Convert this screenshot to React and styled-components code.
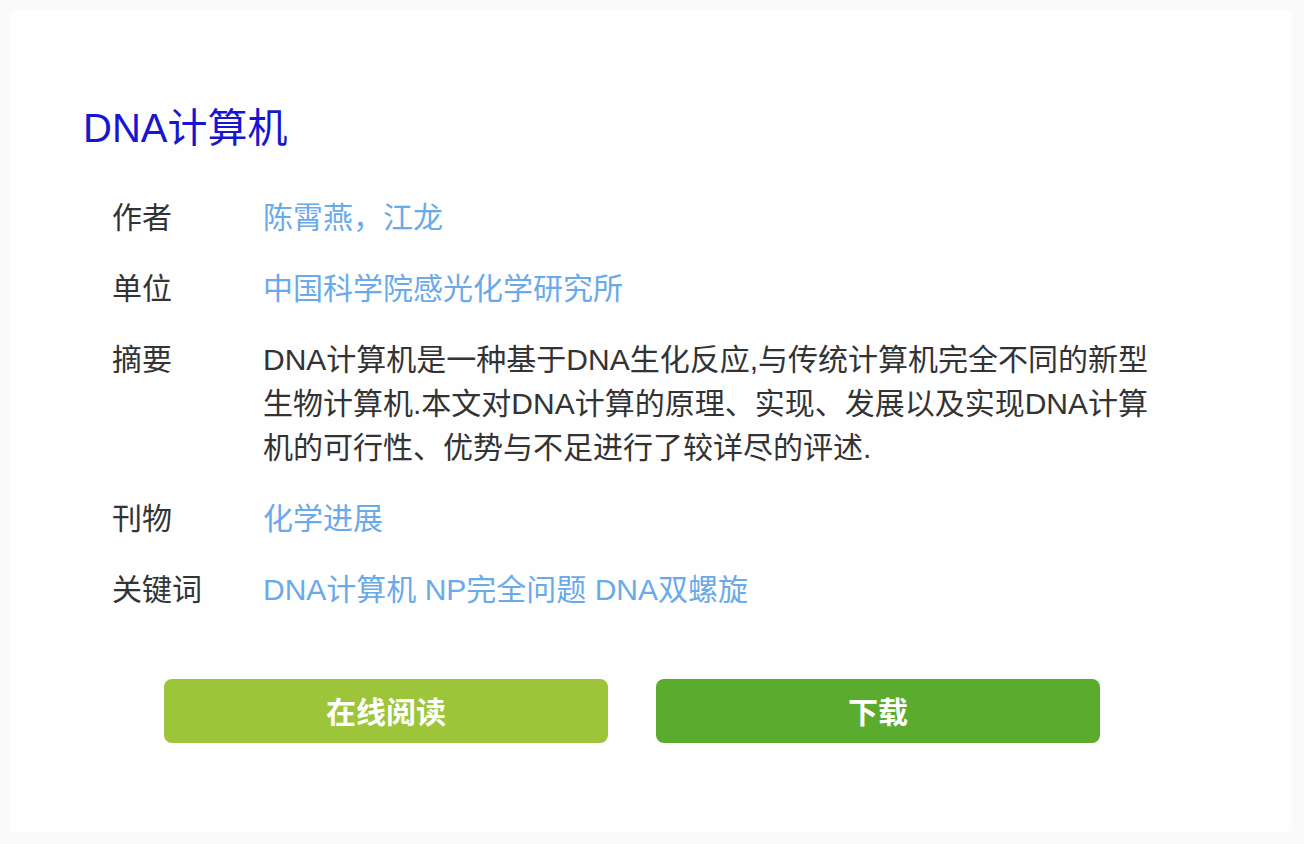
import React from "react";
import styled, { createGlobalStyle } from "styled-components";

const Global = createGlobalStyle`
  html, body { margin: 0; padding: 0; background: #fafafb; }
  body { font-family: "Liberation Sans", "Noto Sans CJK SC", sans-serif; }
`;

const Page = styled.div`
  width: 1304px;
  height: 844px;
  box-sizing: border-box;
  padding: 10px 12px 12px 10px;
`;

const Card = styled.div`
  height: 100%;
  box-sizing: border-box;
  background: #fefeff;
  border-radius: 6px;
  padding: 92px 0 0 73px;
  display: flex;
  flex-direction: column;
`;

const Title = styled.h1`
  margin: 0;
  font-size: 40px;
  line-height: 52px;
  font-weight: 400;
  color: #1616cf;
`;

const Fields = styled.div`
  margin-top: 42px;
  padding-left: 29px;
  display: flex;
  flex-direction: column;
  gap: 27px;
`;

const Row = styled.div`
  display: grid;
  grid-template-columns: 151px 890px;
  font-size: 30px;
  line-height: 44px;
`;

const Label = styled.div`
  color: #333;
`;

const Value = styled.div`
  color: ${(p) => (p.$link ? "#6aaae8" : "#333")};
`;

const Buttons = styled.div`
  margin-top: 67px;
  padding-left: 81px;
  display: flex;
  gap: 48px;
`;

const Button = styled.button`
  width: 444px;
  height: 64px;
  border: none;
  border-radius: 8px;
  background: ${(p) => p.$bg};
  color: #fff;
  font-family: "Noto Sans CJK SC", sans-serif;
  font-size: 30px;
  font-weight: 700;
  line-height: 1;
  padding: 0 0 2px;
  display: flex;
  align-items: center;
  justify-content: center;
  cursor: pointer;
`;

const rows = [
  { label: "作者", value: "陈霄燕，江龙", link: true },
  { label: "单位", value: "中国科学院感光化学研究所", link: true },
  {
    label: "摘要",
    value:
      "DNA计算机是一种基于DNA生化反应,与传统计算机完全不同的新型生物计算机.本文对DNA计算的原理、实现、发展以及实现DNA计算机的可行性、优势与不足进行了较详尽的评述.",
    link: false,
  },
  { label: "刊物", value: "化学进展", link: true },
  { label: "关键词", value: "DNA计算机 NP完全问题 DNA双螺旋", link: true },
];

export default function App() {
  return (
    <>
      <Global />
      <Page>
        <Card>
          <Title>DNA计算机</Title>
          <Fields>
            {rows.map((r) => (
              <Row key={r.label}>
                <Label>{r.label}</Label>
                <Value $link={r.link}>{r.value}</Value>
              </Row>
            ))}
          </Fields>
          <Buttons>
            <Button $bg="#9dc53a">在线阅读</Button>
            <Button $bg="#5aab2e">下载</Button>
          </Buttons>
        </Card>
      </Page>
    </>
  );
}
